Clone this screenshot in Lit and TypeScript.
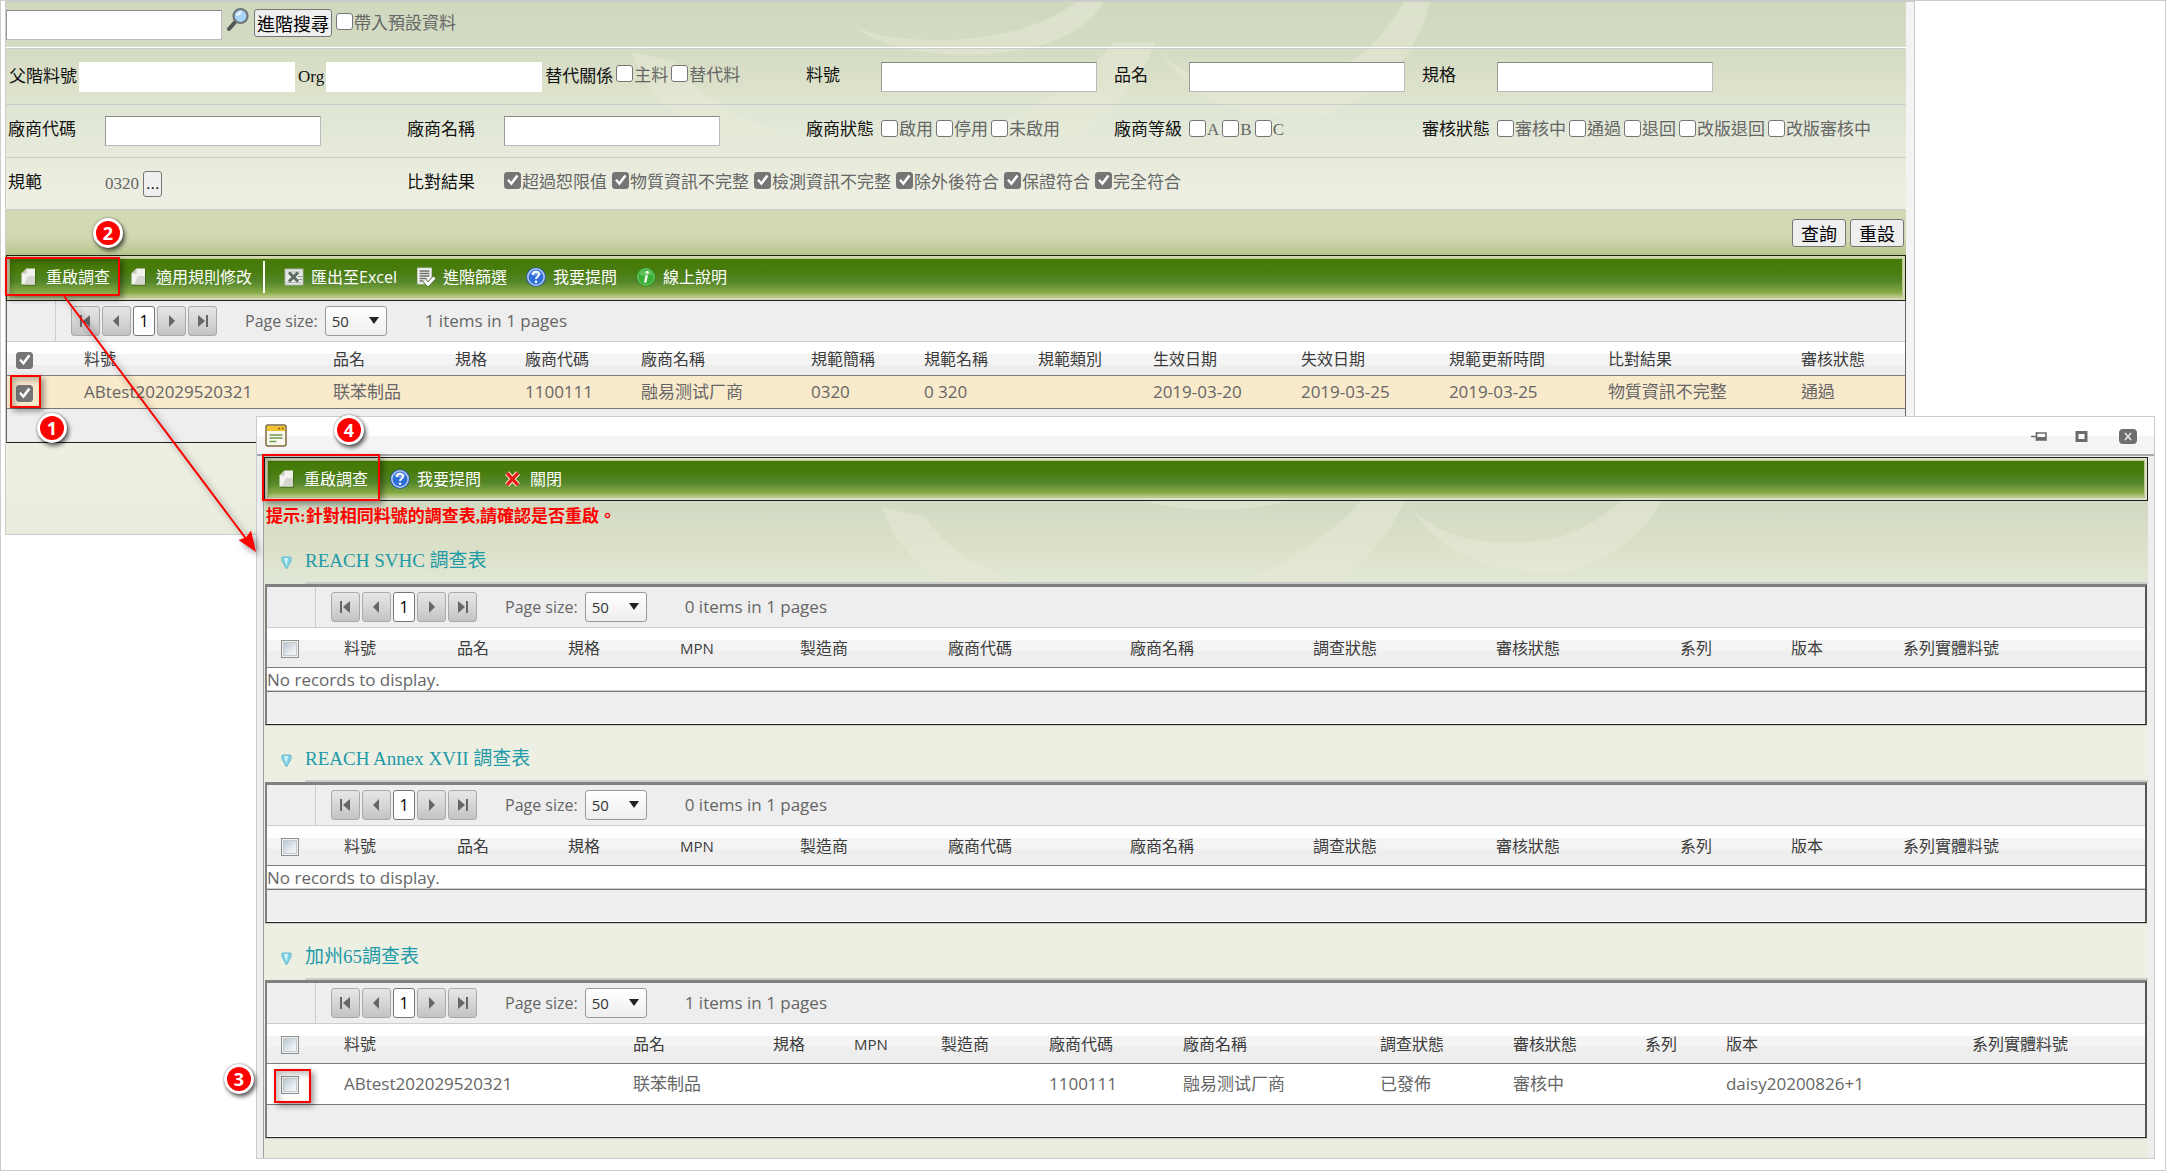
import { LitElement, html, css, TemplateResult } from "lit";
import { customElement, property } from "lit/decorators.js";
import { classMap } from "lit/directives/class-map.js";

type Column = { label: string; width: number };
type IconName = "doc" | "excel" | "filter" | "help" | "info" | "cross";

const icons: Record<IconName, TemplateResult> = {
  doc: html`<svg class="icon" viewBox="0 0 20 20" aria-hidden="true">
    <path d="M7.5 2H16v16H2.5V7z" fill="#2f5208" opacity=".45" transform="translate(1 1)" />
    <path d="M7.5 1.5H16v16H2.5V6.500z" fill="#f1f1ee" />
    <path d="M9 9h7v8.500H5z" fill="#d5d6d0" />
    <path d="M7.500 1.500V6.500H2.500z" fill="#c3c8bb" />
  </svg>`,
  excel: html`<svg class="icon" viewBox="0 0 20 20" aria-hidden="true">
    <rect x="1" y="2" width="18" height="16" fill="#e9ebe8" stroke="#a9b3a4" />
    <path d="M3 5h14M3 15.500h14" stroke="#aab2ad" />
    <path d="M5 5.500l9 9M14 5.500l-9 9" stroke="#5b6a5c" stroke-width="3" />
    <path d="M14 9.500h4M14.500 12.500h3.500" stroke="#8a958c" />
  </svg>`,
  filter: html`<svg class="icon" viewBox="0 0 20 20" aria-hidden="true">
    <path d="M1.500 1h14v16h-14z" fill="#f4f4f4" stroke="#c4c7c0" />
    <path d="M3.500 4h10M3.500 6.500h10M3.500 9h10M3.500 11.500h7M3.500 14h4" stroke="#6d7168" stroke-width="1.400" />
    <path d="M8.500 13.500l3.500 4 6.500-7" fill="none" stroke="#55703a" stroke-width="4.400" />
    <path d="M8.500 13.500l3.500 4 6.500-7" fill="none" stroke="#fff" stroke-width="2.800" />
  </svg>`,
  help: html`<svg class="icon" viewBox="0 0 20 20" aria-hidden="true">
    <circle cx="10" cy="10" r="9.800" fill="#1f51b5" />
    <circle cx="10" cy="10" r="8.200" fill="#2f6fd6" stroke="#b7cdf3" stroke-width="1.500" />
    <path d="M4 7a6.500 5.500 0 0 1 12 0q-6 3-12 0z" fill="#86b1f2" opacity=".7" />
    <path d="M7 8c0-4.200 6-4 6-.5 0 2.200-3 2.200-3 4.500" fill="none" stroke="#fff" stroke-width="2" />
    <circle cx="10" cy="14.800" r="1.300" fill="#fff" />
  </svg>`,
  info: html`<svg class="icon" viewBox="0 0 20 20" aria-hidden="true">
    <circle cx="10" cy="10" r="9.500" fill="#1f8a1f" />
    <circle cx="10" cy="10" r="8.300" fill="#3aae35" stroke="#7fce74" />
    <path d="M3.500 7.500a6.800 5.500 0 0 1 13 0q-6.500 2-13 0z" fill="#8fdc84" opacity=".5" />
    <circle cx="11.300" cy="5.200" r="1.500" fill="#fff" />
    <path d="M10.800 8.200l-1.700 7.300" fill="none" stroke="#fff" stroke-width="2.300" />
  </svg>`,
  cross: html`<svg class="icon" viewBox="0 0 20 20" aria-hidden="true">
    <path d="M4 4l11 12M15 4L4 16" stroke="#f5d9cf" stroke-width="5.500" />
    <path d="M4 4l11 12M15 4L4 16" stroke="#e01b12" stroke-width="3.200" />
  </svg>`,
};

const backdrop = html`<svg class="backdrop" viewBox="0 0 1900 140" preserveAspectRatio="xMidYMin slice" aria-hidden="true">
  <g fill="#e8ebd8" opacity=".48">
    <path d="M850 25Q880 40 950 38Q1030 32 1070 0H1098Q1070 46 980 52Q890 56 850 25z" />
    <path d="M1108 40L1150 40Q1130 90 1070 138H950Q1060 100 1108 40z" />
    <path d="M625 50L670 60Q700 115 820 140H720Q650 115 625 50z" />
    <path d="M1155 50Q1190 88 1260 86Q1350 84 1398 0H1424Q1400 90 1310 116Q1200 122 1155 50z" />
  </g>
</svg>`;

const checkboxStyles = css`
  input[type="checkbox"] {
    appearance: none;
    flex: none;
    box-sizing: border-box;
    width: 17px;
    height: 17px;
    margin: 0;
    border: 1px solid #767676;
    border-radius: 3px;
    background: #fff;
    display: inline-block;
  }
  input[type="checkbox"]:checked {
    background: #757575;
  }
  input[type="checkbox"]:checked::after {
    content: "";
    display: block;
    width: 15px;
    height: 15px;
    background: #fff;
    clip-path: polygon(14% 50%, 26% 40%, 41% 58%, 76% 12%, 90% 22%, 43% 84%);
  }
`;

@customElement("tool-strip")
class ToolStrip extends LitElement {
  @property({ type: Boolean }) compact = false;
  @property({ attribute: false }) items: ([IconName, string] | null)[] = [];

  static styles = css`
    :host { display: block; }
    .frame { border: 1px solid #1c2113; padding: 3px; background: #d3d9b4; }
    .bar {
      display: flex;
      align-items: center;
      gap: 19px;
      box-sizing: border-box;
      height: 38px;
      padding: 0 9px 3px;
      background: linear-gradient(#457a08, #487c0c 30%, #54862a 60%, #86aa45 88%, #b9cc8a);
      box-shadow: 0 0 0 1px #b9c78c;
    }
    .frame.compact { background: #dbe2cc; }
    .compact .bar { gap: 22px; height: 36px; padding: 0 9px; }
    button {
      display: flex;
      align-items: center;
      gap: 7px;
      padding: 0;
      border: 0;
      background: none;
      color: #fff;
      font: 16px/24px "Open Sans", "Noto Sans CJK TC", sans-serif;
      white-space: nowrap;
    }
    .icon { width: 20px; height: 20px; }
    .divider { width: 2px; height: 32px; margin: 0 0 0 -8px; background: #fff; }
  `;

  render() {
    return html`<div class=${classMap({ frame: true, compact: this.compact })}>
      <div class="bar" role="toolbar">
        ${this.items.map((item) =>
          item ? html`<button type="button">${icons[item[0]]}<span>${item[1]}</span></button>` : html`<span class="divider"></span>`
        )}
      </div>
    </div>`;
  }
}

@customElement("data-grid")
class DataGrid extends LitElement {
  @property({ attribute: false }) columns: Column[] = [];
  @property({ attribute: false }) rows: string[][] = [];
  @property({ type: Boolean }) selected = false;
  @property({ type: Boolean }) framed = false;

  static styles = [
    checkboxStyles,
    css`
      :host {
        display: block;
        color: #666;
        font: 17px/22px "Open Sans", "Noto Sans CJK TC", sans-serif;
      }
      .grid { border: 1px solid #666; border-width: 0 1px 1px; border-bottom-color: #222; background: #eee; }
      .framed { border-width: 3px 2px 1px; border-color: #808080 #555 #222 #808080; box-shadow: 0 1px #ccc; }
      .pager { display: flex; align-items: center; height: 40px; border-bottom: 1px solid #ccc; }
      .gutter { align-self: stretch; width: 48px; margin-right: 15px; border-right: 1px solid #ccc; }
      .steps { display: flex; gap: 2px; }
      .steps button {
        box-sizing: border-box;
        width: 29px;
        height: 30px;
        padding: 0;
        border: 1px solid #aaa;
        border-radius: 3px;
        background: linear-gradient(#e6e6e6, #d6d6d6 50%, #c3c3c3);
        color: #000;
        font: 16px/26px "Open Sans", sans-serif;
      }
      .steps button.current { width: 22px; border-color: #777; background: #fff; }
      .steps svg { display: block; width: 15px; height: 14px; margin: 0 auto; fill: #666; }
      .size { display: flex; align-items: center; gap: 7px; margin: 0 38px 0 28px; font-size: 16px; }
      .picker { position: relative; display: block; }
      select {
        appearance: none;
        box-sizing: border-box;
        display: block;
        width: 62px;
        height: 30px;
        padding: 0 6px;
        border: 1px solid #999;
        border-radius: 3px;
        background: linear-gradient(#fff, #eee);
        color: #333;
        font: 15px/26px "Open Sans", sans-serif;
      }
      .picker svg { position: absolute; right: 8px; top: 11px; width: 10px; height: 7px; fill: #222; pointer-events: none; }
      table { width: 100%; border-collapse: collapse; table-layout: fixed; }
      th, td { padding: 0 0 0 9px; text-align: left; font-weight: 400; white-space: nowrap; }
      th {
        height: 33px;
        border-bottom: 1px solid #808080;
        color: #3c3c3c;
        font-size: 16px;
        background: linear-gradient(#fff 12px, #f4f4f4 12px, #f4f4f4 23px, #eee 23px);
      }
      td { height: 32px; background: #f9eacc; border-bottom: 1px solid #777; }
      .footer { height: 33px; }
      .framed .footer { height: 31px; border-bottom: 1px solid #fff; }
      .framed th { height: 39px; }
      .framed td { height: 40px; background: #fff; }
      .framed th:first-child, .framed td:first-child { padding-left: 14px; }
      .framed th.latin { font-size: 15px; }
      .framed td.none { height: 23px; padding: 0; border-top: 1px solid #808080; box-shadow: inset 0 -1px #ccc; }
      th input, td input { vertical-align: middle; }
      .framed input[type="checkbox"] {
        width: 18px;
        height: 18px;
        border: 1px solid #8e8f8f;
        border-radius: 0;
        background: linear-gradient(135deg, #aebfcb, #eef1f4 70%) padding-box content-box;
        padding: 2px;
        box-shadow: inset 0 0 0 1px #f2f2f2, inset 0 0 0 2px #c4cbd0;
      }
    `,
  ];

  private step(label: string, path: string) {
    return html`<button type="button" aria-label=${label}><svg viewBox="0 0 15 14" aria-hidden="true"><path d=${path} /></svg></button>`;
  }

  render() {
    const total = this.columns.reduce((sum, c) => sum + c.width, 0);
    const latin = (text: string) => /^[\x20-\x7e]*$/.test(text);
    return html`<div class=${classMap({ grid: true, framed: this.framed })}>
      <div class="pager">
        <span class="gutter"></span>
        <div class="steps">
          ${this.step("First page", "M2 1h2v12H2zM12 1v12L5 7z")}
          ${this.step("Previous page", "M10 1v12L4 7z")}
          <button type="button" class="current">1</button>
          ${this.step("Next page", "M5 1v12l6-6z")}
          ${this.step("Last page", "M11 1h2v12h-2zM3 1v12l7-6z")}
        </div>
        <label class="size">Page size:
          <span class="picker">
            <select><option>50</option></select>
            <svg viewBox="0 0 10 7" aria-hidden="true"><path d="M0 0h10L5 7z" /></svg>
          </span>
        </label>
        <span>${this.rows.length} items in 1 pages</span>
      </div>
      <table>
        <colgroup>${this.columns.map((c) => html`<col style="width:${(c.width / total) * 100}%" />`)}</colgroup>
        <thead>
          <tr>${this.columns.map((c, i) =>
            i === 0
              ? html`<th><input type="checkbox" aria-label="Select all" .checked=${this.selected} /></th>`
              : html`<th class=${latin(c.label) ? "latin" : ""}>${c.label}</th>`
          )}</tr>
        </thead>
        <tbody>
          ${this.rows.length
            ? this.rows.map((row) => html`<tr>
                <td><input type="checkbox" aria-label="Select row" .checked=${this.selected} /></td>
                ${row.map((cell) => html`<td>${cell}</td>`)}
              </tr>`)
            : html`<tr><td class="none" colspan=${this.columns.length}>No records to display.</td></tr>`}
        </tbody>
      </table>
      <div class="footer"></div>
    </div>`;
  }
}

const cols = (...pairs: [string, number][]): Column[] => pairs.map(([label, width]) => ({ label, width }));

const resultColumns = cols(
  ["", 68], ["料號", 249], ["品名", 122], ["規格", 70], ["廠商代碼", 116], ["廠商名稱", 170], ["規範簡稱", 113],
  ["規範名稱", 114], ["規範類別", 115], ["生效日期", 148], ["失效日期", 148], ["規範更新時間", 159], ["比對結果", 193], ["審核狀態", 113]
);
const resultRows = [
  ["ABtest202029520321", "联苯制品", "", "1100111", "融易测试厂商", "0320", "0 320", "", "2019-03-20", "2019-03-25", "2019-03-25", "物質資訊不完整", "通過"],
];
const surveyColumns = cols(
  ["", 68], ["料號", 113], ["品名", 111], ["規格", 112], ["MPN", 120], ["製造商", 148], ["廠商代碼", 182],
  ["廠商名稱", 183], ["調查狀態", 183], ["審核狀態", 184], ["系列", 111], ["版本", 112], ["系列實體料號", 251]
);
const californiaColumns = cols(
  ["", 68], ["料號", 289], ["品名", 140], ["規格", 81], ["MPN", 87], ["製造商", 108], ["廠商代碼", 134],
  ["廠商名稱", 197], ["調查狀態", 133], ["審核狀態", 132], ["系列", 81], ["版本", 246], ["系列實體料號", 182]
);
const californiaRows = [
  ["ABtest202029520321", "联苯制品", "", "", "", "1100111", "融易测试厂商", "已發佈", "審核中", "", "daisy20200826+1", ""],
];

@customElement("app-root")
class AppRoot extends LitElement {
  static styles = [
    checkboxStyles,
    css`
      :host { display: block; font: 17px/24px "Liberation Serif", "Noto Sans CJK TC", serif; color: #111; }
      .page {
        position: relative;
        box-sizing: border-box;
        min-height: 100vh;
        overflow: hidden;
        border: 1px solid #ccc;
        background: #fff;
      }
      .backdrop { position: absolute; left: 0; top: 0; width: 100%; height: 140px; pointer-events: none; }
      .panel {
        width: calc(100% - 254px);
        margin-left: 4px;
        box-sizing: border-box;
        padding-right: 8px;
        border: 1px solid #ccc;
        background: #f3f3f3;
      }
      .sheet {
        position: relative;
        padding-bottom: 91px;
        background: linear-gradient(#cfd9be, #d5dcc4 50px, #dde2cb 90px, #dfe6d6 106px, #e6eada 150px, #edefe2 195px, #edefe2 440px, #e9edde);
      }
      .sheet > *:not(.backdrop) { position: relative; }
      .search { display: flex; align-items: center; height: 45px; border-bottom: 1px solid #fff; }
      .text {
        box-sizing: border-box;
        width: 216px;
        height: 30px;
        border: 1px solid #bbb;
        border-top-color: #888;
        border-left-color: #999;
        background: #fff;
        font: inherit;
      }
      .text.plain { border-color: #fff; }
      .glass { height: 36px; margin: 0 3px; padding: 0 0 10px; border: 0; background: none; }
      .glass svg { display: block; width: 26px; height: 26px; }
      .push {
        box-sizing: border-box;
        height: 28px;
        padding: 0 2px;
        border: 1px solid #767676;
        border-radius: 3px;
        background: #efefef;
        color: #000;
        font: 18px/24px "Noto Sans CJK TC", sans-serif;
      }
      .check { display: flex; align-items: center; gap: 1px; color: #666; white-space: nowrap; }
      .check input[type="checkbox"] { margin-top: -4px; }
      .search .push { margin-top: -4px; }
      .search .check { margin: -2px 0 0 4px; }
      .row {
        display: grid;
        grid-template-columns: 399fr 399fr 308fr 308fr 486fr;
        align-items: center;
        height: 52px;
        border-top: 1px solid #ccc;
      }
      .row.tall { height: 55px; }
      .row.last { height: 51px; border-bottom: 1px solid #ccc; }
      .field { display: flex; align-items: center; min-width: 0; white-space: nowrap; }
      .wide { grid-column: span 2; gap: 3px; padding-left: 3px; }
      .wide .field { gap: 2px; }
      .caption { flex: none; width: 97px; padding-left: 2px; margin-top: -2px; }
      .narrow .caption { width: 75px; }
      .checks { display: flex; gap: 3px; margin-top: -2px; }
      .checks.roomy { gap: 5px; }
      .code { color: #666; }
      .more { height: 26px; margin-left: 4px; padding: 0 2px; border: 1px solid #767676; border-radius: 3px; background: #efefef; font: 16px/20px "Liberation Sans", sans-serif; }
      .actions { display: flex; justify-content: flex-end; align-items: center; gap: 4px; height: 45px; padding: 0 2px; background: linear-gradient(#d2dab5, #d1d9b2 60%, #b9c58d); }
      .actions .push { width: 54px; }

      .window { position: absolute; left: 255px; right: 10px; top: 415px; box-sizing: border-box; border: 1px solid #ccc; background: #eee; }
      .title {
        display: flex;
        align-items: center;
        gap: 25px;
        height: 37px;
        padding: 0 17px 0 8px;
        margin-bottom: 1px;
        background: linear-gradient(#fff 19px, #f4f4f4 19px);
        border-bottom: 2px solid #a5a7ad;
      }
      .title .form { width: 22px; height: 23px; margin-right: auto; }
      .title button { display: block; padding: 0; border: 0; background: none; }
      .title button svg { display: block; width: 18px; height: 18px; }
      .title button.close { margin-left: 3px; }
      .body {
        position: relative;
        margin: 0 6px;
        padding-bottom: 19px;
        border-left: 1px solid #9aa0a6;
        background: linear-gradient(#cfd9be, #d4dbc4 55px, #dce1c9 95px, #e0e7d6 125px, #edefe2 230px, #edefe2 600px, #e9edde);
      }
      .body > *:not(.backdrop) { position: relative; }
      .hint { margin: 0; height: 27px; padding: 3px 2px 0; box-sizing: border-box; color: #f00; font-weight: 700; line-height: 26px; }
      h2 {
        display: flex;
        align-items: center;
        gap: 13px;
        box-sizing: border-box;
        height: 54px;
        margin: 0;
        padding: 12px 0 0 17px;
        color: #1f9aa8;
        font-size: 19px;
        font-weight: 400;
      }
      h2 svg { width: 11px; height: 14px; margin-top: 3px; }
      .rule { height: 2px; margin-left: 41px; background: #ccc; }
      .block { padding: 0 1px 1px; }

      .mark { position: absolute; box-sizing: border-box; border: 2px solid #f00; box-shadow: 3px 3px 6px #0006, inset 3px 3px 6px #0004; pointer-events: none; }
      .m1 { left: 9px; top: 374px; width: 31px; height: 33px; }
      .m2 { left: 4px; top: 256px; width: 115px; height: 39px; }
      .m3 { left: 273px; top: 1068px; width: 37px; height: 34px; }
      .m4 { left: 261px; top: 453px; width: 118px; height: 47px; }
      .badge {
        position: absolute;
        box-sizing: border-box;
        width: 30px;
        height: 30px;
        border: 3px solid #fff;
        border-radius: 50%;
        background: #f00;
        box-shadow: 2px 3px 4px #0009, 0 0 2px #0008;
        color: #fff;
        font: 700 18px/24px "Open Sans", sans-serif;
        text-align: center;
      }
      .b1 { left: 36px; top: 412px; }
      .b2 { left: 92px; top: 217px; }
      .b3 { left: 223px; top: 1063px; }
      .b4 { left: 333px; top: 414px; }
      .arrow { position: absolute; left: 55px; top: 288px; width: 210px; height: 270px; pointer-events: none; filter: drop-shadow(3px 3px 3px #0007); }
    `,
  ];

  private check(label: string, checked = false) {
    return html`<label class="check"><input type="checkbox" .checked=${checked} />${label}</label>`;
  }

  private checks(labels: string[], checked = false) {
    return html`<div class=${classMap({ checks: true, roomy: checked })}>${labels.map((l) => this.check(l, checked))}</div>`;
  }

  private input(label: string, narrow = false) {
    return html`<label class=${classMap({ field: true, narrow })}><span class="caption">${label}</span><input class="text" type="text" /></label>`;
  }

  private group(label: string, content: unknown, narrow = false) {
    return html`<div class=${classMap({ field: true, narrow })}><span class="caption">${label}</span>${content}</div>`;
  }

  private survey(title: string, columns: Column[], rows: string[][]) {
    return html`<section>
      <h2>
        <svg viewBox="0 0 11 14" aria-hidden="true"><path d="M1 1h9v4L5.500 13 1 5z" fill="#7fd0e2" stroke="#6cbccf" /><path d="M3 2h4L5.500 10z" fill="#d3f3f9" /></svg>
        <span>${title}</span>
      </h2>
      <div class="rule"></div>
      <div class="block"><data-grid framed .columns=${columns} .rows=${rows}></data-grid></div>
    </section>`;
  }

  render() {
    return html`<main class="page">
      <section class="panel">
        <div class="sheet">
          ${backdrop}
          <div class="search">
            <input class="text" type="text" aria-label="搜尋" />
            <button class="glass" type="button" aria-label="搜尋">
              <svg viewBox="0 0 26 26" aria-hidden="true">
                <path d="M11 14L4 22" stroke="#555" stroke-width="4" stroke-linecap="round" />
                <circle cx="15.500" cy="9" r="7" fill="#a9d3f5" stroke="#6e747a" stroke-width="2.200" />
                <path d="M11 9a5 5 0 0 1 6-4.500q-1 4-6 4.500z" fill="#e8f5ff" />
              </svg>
            </button>
            <button class="push" type="button">進階搜尋</button>
            ${this.check("帶入預設資料")}
          </div>
          <div class="row tall">
            <div class="field wide">
              <label class="field">父階料號<input class="text plain" type="text" /></label>
              <label class="field">Org<input class="text plain" type="text" /></label>
              <span>替代關係</span>
              ${this.checks(["主料", "替代料"])}
            </div>
            ${this.input("料號", true)}${this.input("品名", true)}${this.input("規格", true)}
          </div>
          <div class="row">
            ${this.input("廠商代碼")}${this.input("廠商名稱")}
            ${this.group("廠商狀態", this.checks(["啟用", "停用", "未啟用"]), true)}
            ${this.group("廠商等級", this.checks(["A", "B", "C"]), true)}
            ${this.group("審核狀態", this.checks(["審核中", "通過", "退回", "改版退回", "改版審核中"]), true)}
          </div>
          <div class="row last">
            ${this.group("規範", html`<span class="code">0320</span><button class="more" type="button">...</button>`)}
            ${this.group("比對結果", this.checks(["超過恕限值", "物質資訊不完整", "檢測資訊不完整", "除外後符合", "保證符合", "完全符合"], true))}
          </div>
          <div class="actions">
            <button class="push" type="button">查詢</button>
            <button class="push" type="button">重設</button>
          </div>
          <tool-strip .items=${[["doc", "重啟調查"], ["doc", "適用規則修改"], null, ["excel", "匯出至Excel"], ["filter", "進階篩選"], ["help", "我要提問"], ["info", "線上說明"]]}></tool-strip>
          <data-grid selected .columns=${resultColumns} .rows=${resultRows}></data-grid>
        </div>
      </section>

      <section class="window">
        <header class="title">
          <svg class="form" viewBox="0 0 22 23" aria-hidden="true">
            <rect x="1" y="1" width="20" height="21" rx="2" fill="#f8f8ef" stroke="#7c6a3c" stroke-width="1.500" />
            <path d="M2 2h18v5H2z" fill="#f2c230" />
            <path d="M13 4.500h2M16.500 4.500h2" stroke="#8a5b10" stroke-width="1.500" />
            <path d="M4.500 11h13M4.500 14h13M4.500 17.500h7" stroke="#6f9a4c" stroke-width="1.700" />
          </svg>
          <button type="button" aria-label="Pin"><svg viewBox="0 0 18 18" aria-hidden="true"><path d="M1 9.500h5M6.500 5v9M7 6h9v7H7" fill="none" stroke="#6b6b6b" stroke-width="1.600" /><path d="M7 10h9v3H7z" fill="#6b6b6b" /></svg></button>
          <button type="button" aria-label="Maximize"><svg viewBox="0 0 18 18" aria-hidden="true"><path d="M4 5.500h9v8H4z" fill="#fff" stroke="#6b6b6b" stroke-width="3" /></svg></button>
          <button class="close" type="button" aria-label="Close"><svg viewBox="0 0 18 18" aria-hidden="true"><rect x="0" y="2" width="18" height="15" rx="4" fill="#6f6f6f" /><path d="M6 6l6 7M12 6l-6 7" stroke="#eee" stroke-width="1.400" /></svg></button>
        </header>
        <div class="body">
          ${backdrop}
          <tool-strip compact .items=${[["doc", "重啟調查"], ["help", "我要提問"], ["cross", "關閉"]]}></tool-strip>
          <p class="hint">提示:針對相同料號的調查表,請確認是否重啟。</p>
          ${this.survey("REACH SVHC 調查表", surveyColumns, [])}
          ${this.survey("REACH Annex XVII 調查表", surveyColumns, [])}
          ${this.survey("加州65調查表", californiaColumns, californiaRows)}
        </div>
      </section>

      <div class="mark m1"></div>
      <div class="mark m2"></div>
      <div class="mark m3"></div>
      <div class="mark m4"></div>
      <svg class="arrow" viewBox="0 0 210 270" aria-hidden="true">
        <path d="M8 7L191 251" stroke="#f00" stroke-width="2" />
        <path d="M200 263L182.500 251L190 248.500L195 241.500z" fill="#f00" />
      </svg>
      <span class="badge b1">1</span>
      <span class="badge b2">2</span>
      <span class="badge b3">3</span>
      <span class="badge b4">4</span>
    </main>`;
  }
}
